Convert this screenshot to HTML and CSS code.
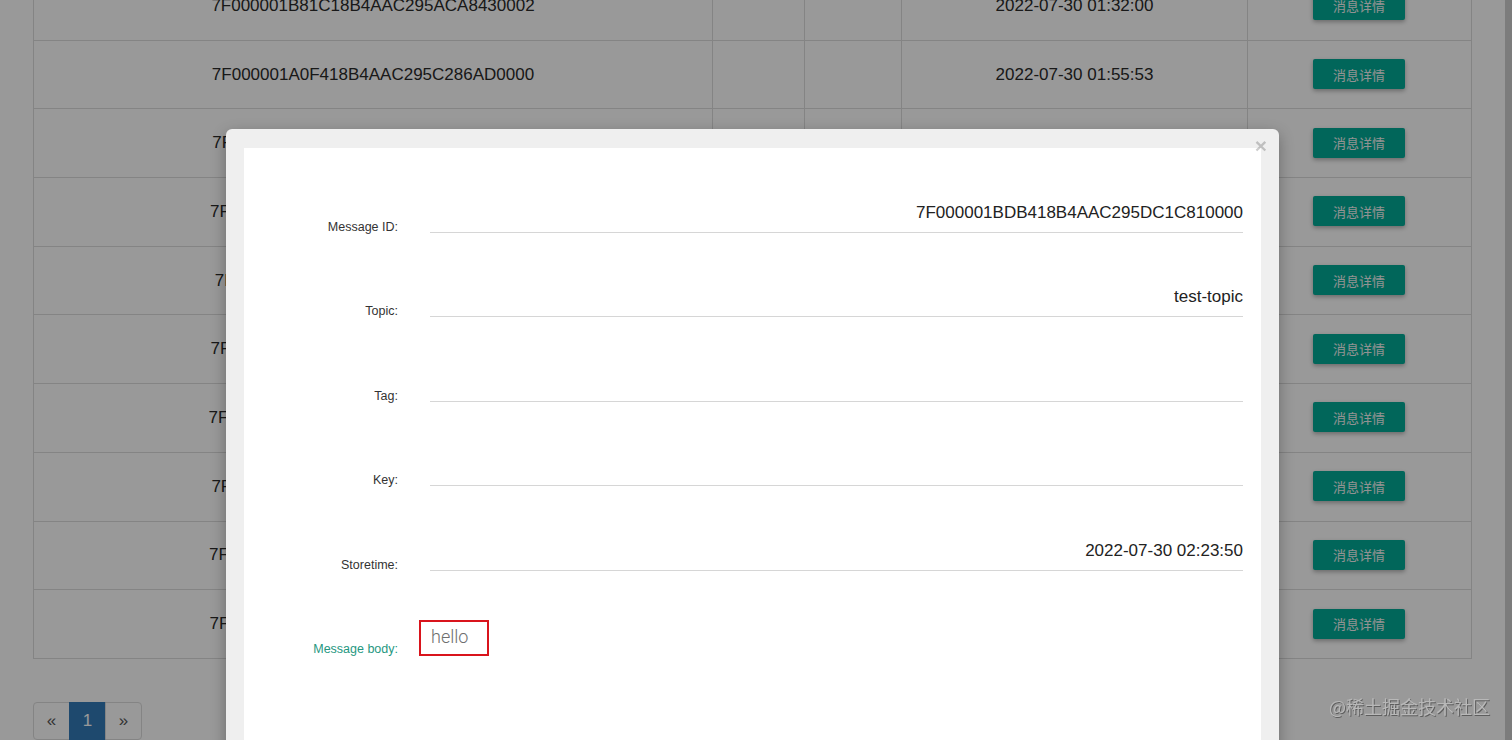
FILE: index.html
```html
<!DOCTYPE html>
<html lang="zh">
<head>
<meta charset="utf-8">
<title>消息列表</title>
<link rel="stylesheet" href="styles.css">
</head>
<body>
<div class="page">
  <table class="msg-table">
    <colgroup>
      <col class="c-id"><col class="c-tag"><col class="c-key"><col class="c-time"><col class="c-op">
    </colgroup>
    <tbody>
      <tr><td>7F000001B81C18B4AAC295ACA8430002</td><td></td><td></td><td>2022-07-30 01:32:00</td><td><button class="btn-detail">消息详情</button></td></tr>
      <tr><td>7F000001A0F418B4AAC295C286AD0000</td><td></td><td></td><td>2022-07-30 01:55:53</td><td><button class="btn-detail">消息详情</button></td></tr>
      <tr><td>7F000001A0F418B4AAC295C2A1B40001</td><td></td><td></td><td>2022-07-30 01:58:12</td><td><button class="btn-detail">消息详情</button></td></tr>
      <tr><td>7F000001BDB418B4AAC295D0C8A30000</td><td></td><td></td><td>2022-07-30 02:05:41</td><td><button class="btn-detail">消息详情</button></td></tr>
      <tr><td>7F0000011F4418B4AAC295D1E1210000</td><td></td><td></td><td>2022-07-30 02:09:27</td><td><button class="btn-detail">消息详情</button></td></tr>
      <tr><td>7F000001A0F418B4AAC295D4C7AD0002</td><td></td><td></td><td>2022-07-30 02:12:06</td><td><button class="btn-detail">消息详情</button></td></tr>
      <tr><td>7F000001BDB418B4AAC295D8B6DC0000</td><td></td><td></td><td>2022-07-30 02:15:33</td><td><button class="btn-detail">消息详情</button></td></tr>
      <tr><td>7F000001A0F418B4AAC295DA1E4B0003</td><td></td><td></td><td>2022-07-30 02:18:09</td><td><button class="btn-detail">消息详情</button></td></tr>
      <tr><td>7F000001BDB418B4AAC295DB9D8A0001</td><td></td><td></td><td>2022-07-30 02:20:47</td><td><button class="btn-detail">消息详情</button></td></tr>
      <tr><td>7F000001BDB418B4AAC295DC1C810000</td><td></td><td></td><td>2022-07-30 02:23:50</td><td><button class="btn-detail">消息详情</button></td></tr>
    </tbody>
  </table>
  <ul class="pagination">
    <li class="page-item">«</li>
    <li class="page-item active">1</li>
    <li class="page-item">»</li>
  </ul>
</div>
<div class="scroll-strip"></div>
<div class="backdrop"></div>
<div class="modal">
  <button class="close" type="button">×</button>
  <div class="modal-body">
    <div class="detail-form">
      <div class="detail-row"><span class="label">Message ID:</span><div class="field">7F000001BDB418B4AAC295DC1C810000</div></div>
      <div class="detail-row"><span class="label">Topic:</span><div class="field">test-topic</div></div>
      <div class="detail-row"><span class="label">Tag:</span><div class="field"></div></div>
      <div class="detail-row"><span class="label">Key:</span><div class="field"></div></div>
      <div class="detail-row"><span class="label">Storetime:</span><div class="field">2022-07-30 02:23:50</div></div>
      <div class="detail-row"><span class="label label-active">Message body:</span><div class="body-box">hello</div></div>
    </div>
  </div>
</div>
<div class="watermark">@稀土掘金技术社区</div>
</body>
</html>
```

FILE: styles.css
```css
html, body {
  margin: 0;
  height: 740px;
  overflow: hidden;
}
body {
  background: #fff;
  font-family: "Liberation Sans", Arial, sans-serif;
  color: #333;
}
.page {
  padding-left: 33px;
}
.msg-table {
  margin-top: -29px;
  width: 1439px;
  border-collapse: collapse;
  table-layout: fixed;
  font-size: 17px;
  color: #2a2a2a;
}
.c-id { width: 679px; }
.c-tag { width: 92px; }
.c-key { width: 97px; }
.c-time { width: 346px; }
.c-op { width: 224px; }
.msg-table tr {
  height: 68.7px;
}
.msg-table td {
  border: 1px solid #dcdcdc;
  text-align: center;
  vertical-align: middle;
  padding: 0;
}
.btn-detail {
  width: 92px;
  height: 30px;
  border: 0;
  border-radius: 2px;
  background: #02ab96;
  color: #f4f4f4;
  font-family: "Noto Sans CJK SC", sans-serif;
  font-size: 13px;
  box-shadow: 0 2px 4px rgba(0, 0, 0, 0.3);
  margin: -1px 0 0 -1px;
}
.pagination {
  list-style: none;
  display: flex;
  margin: 43px 0 0;
  padding: 0;
}
.page-item {
  width: 37px;
  height: 38px;
  box-sizing: border-box;
  border: 1px solid #dcdcdc;
  margin-left: -1px;
  display: flex;
  align-items: center;
  justify-content: center;
  font-size: 17px;
  color: #555;
  background: #fff;
}
.page-item:first-child {
  margin-left: 0;
  border-radius: 4px 0 0 4px;
}
.page-item:last-child {
  border-radius: 0 4px 4px 0;
}
.page-item.active {
  background: #337ab7;
  border-color: #337ab7;
  color: #fff;
}
.scroll-strip {
  position: fixed;
  top: 0;
  right: 0;
  bottom: 0;
  width: 7px;
  background: #cfcfcf;
}
.backdrop {
  position: fixed;
  inset: 0;
  background: rgba(0, 0, 0, 0.4);
  z-index: 10;
}
.modal {
  position: absolute;
  left: 226px;
  top: 129px;
  width: 1053px;
  height: 720px;
  box-sizing: border-box;
  padding: 19px 18px 0;
  background: #efefef;
  border-radius: 6px;
  box-shadow: 0 5px 15px rgba(0, 0, 0, 0.3);
  z-index: 20;
}
.close {
  position: absolute;
  top: 6px;
  right: 12px;
  padding: 0;
  border: 0;
  background: none;
  font-family: "Liberation Sans", Arial, sans-serif;
  font-size: 21px;
  font-weight: bold;
  line-height: 1;
  color: #000;
  opacity: 0.2;
  z-index: 2;
}
.modal-body {
  background: #fff;
  height: 100%;
}
.detail-row {
  display: flex;
  align-items: flex-end;
  height: 84.5px;
}
.label {
  width: 154px;
  flex: none;
  text-align: right;
  font-size: 12.5px;
  line-height: 14px;
  margin-bottom: -1px;
  color: #333;
}
.label-active {
  color: #26977f;
}
.field {
  flex: 1;
  margin: 0 18px 0 32px;
  padding-bottom: 8px;
  min-height: 21px;
  border-bottom: 1px solid #d6d6d6;
  text-align: right;
  font-size: 17px;
  line-height: 22px;
  color: #222;
}
.body-box {
  margin-left: 21px;
  margin-bottom: -1px;
  width: 70px;
  height: 36px;
  box-sizing: border-box;
  border: 2px solid #d9141c;
  padding: 3px 0 0 10px;
  font-family: Roboto, sans-serif;
  font-weight: 300;
  font-size: 18px;
  line-height: 24px;
  color: #6e6e6e;
}
.watermark {
  position: fixed;
  right: 22px;
  top: 695px;
  font-family: "Noto Sans CJK SC", sans-serif;
  font-size: 18px;
  line-height: 22px;
  color: #b8b8b8;
  text-shadow: 1px 1px 0 #5e5e5e;
  z-index: 30;
}
```
